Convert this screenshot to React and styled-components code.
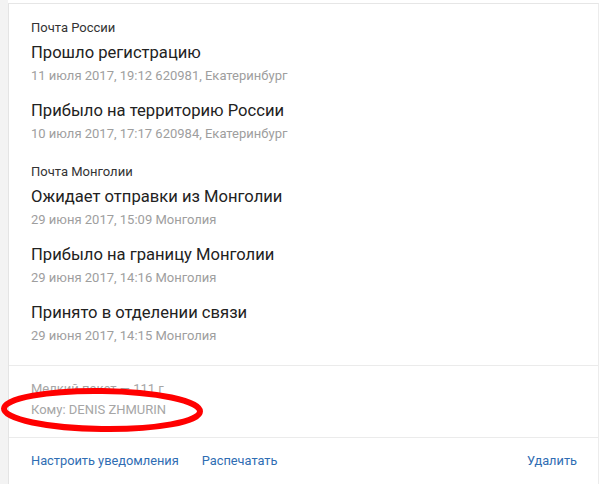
import styled, { createGlobalStyle } from "styled-components";

const GlobalStyle = createGlobalStyle`
  html, body {
    margin: 0;
    padding: 0;
    background: #fff;
    font-family: Roboto, "Liberation Sans", Arial, sans-serif;
  }
`;

const groups = [
  {
    label: "Почта России",
    events: [
      { title: "Прошло регистрацию", sub: "11 июля 2017, 19:12 620981, Екатеринбург" },
      { title: "Прибыло на территорию России", sub: "10 июля 2017, 17:17 620984, Екатеринбург" },
    ],
  },
  {
    label: "Почта Монголии",
    events: [
      { title: "Ожидает отправки из Монголии", sub: "29 июня 2017, 15:09 Монголия" },
      { title: "Прибыло на границу Монголии", sub: "29 июня 2017, 14:16 Монголия" },
      { title: "Принято в отделении связи", sub: "29 июня 2017, 14:15 Монголия" },
    ],
  },
];

const App = () => {
  return (
    <Page>
      <GlobalStyle />
      <Card>
        <History>
          {groups.map((group) => (
            <Group key={group.label}>
              <GroupLabel>{group.label}</GroupLabel>
              {group.events.map((ev) => (
                <Event key={ev.title}>
                  <EventTitle>{ev.title}</EventTitle>
                  <EventSub>{ev.sub}</EventSub>
                </Event>
              ))}
            </Group>
          ))}
        </History>
        <Info>
          <InfoLine>Мелкий пакет — 111 г</InfoLine>
          <InfoLine>Кому: DENIS ZHMURIN</InfoLine>
          {/* red hand-drawn annotation around the recipient */}
          <Mark width="210" height="52" viewBox="0 0 210 52">
            <ellipse
              cx="102"
              cy="25"
              rx="98"
              ry="19"
              fill="none"
              stroke="#ff0000"
              strokeWidth="6"
              transform="rotate(0.8 102 25)"
            />
          </Mark>
        </Info>
        <Actions>
          <ActionLink>Настроить уведомления</ActionLink>
          <ActionLink>Распечатать</ActionLink>
          <Spacer />
          <ActionLink>Удалить</ActionLink>
        </Actions>
      </Card>
    </Page>
  );
};

const Page = styled.div`
  display: flex;
  height: 484px;
  padding: 3px 1px 0 0;
  box-sizing: border-box;
  background: linear-gradient(to right, #f3f3f3 0, #f3f3f3 8px, #fff 8px);
  overflow: hidden;
`;

const Card = styled.div`
  position: relative;
  flex: 1;
  margin-left: 8px;
  background: #fff;
  border-left: 1px solid #e4e4e4;
  border-top: 1px solid #e6e6e6;
  border-right: 1px solid #ececec;
`;

const History = styled.div`
  padding: 16px 22px 20px;
  border-bottom: 1px solid #ebebeb;
`;

const Group = styled.div`
  & + & {
    margin-top: 21px;
  }
`;

const GroupLabel = styled.div`
  font-size: 13px;
  line-height: 16px;
  color: #333;
`;

const Event = styled.div`
  margin-top: 15px;
  ${GroupLabel} + & {
    margin-top: 6px;
  }
`;

const EventTitle = styled.div`
  font-size: 16.6px;
  line-height: 22px;
  color: #222;
`;

const EventSub = styled.div`
  margin-top: 3px;
  font-size: 13px;
  line-height: 18px;
  color: #9e9e9e;
`;

const Info = styled.div`
  position: relative;
  padding: 12px 22px 17px;
  border-bottom: 1px solid #ebebeb;
`;

const InfoLine = styled.div`
  font-size: 13px;
  line-height: 21px;
  color: #a6a6a6;
`;

const Mark = styled.svg`
  position: absolute;
  left: -9px;
  top: 19px;
  pointer-events: none;
`;

const Actions = styled.div`
  display: flex;
  align-items: center;
  gap: 23px;
  padding: 14px 21px 0 22px;
`;

const ActionLink = styled.a`
  font-size: 12.8px;
  line-height: 18px;
  color: #2f6db3;
  cursor: pointer;
`;

const Spacer = styled.div`
  flex: 1;
`;

export default App;
